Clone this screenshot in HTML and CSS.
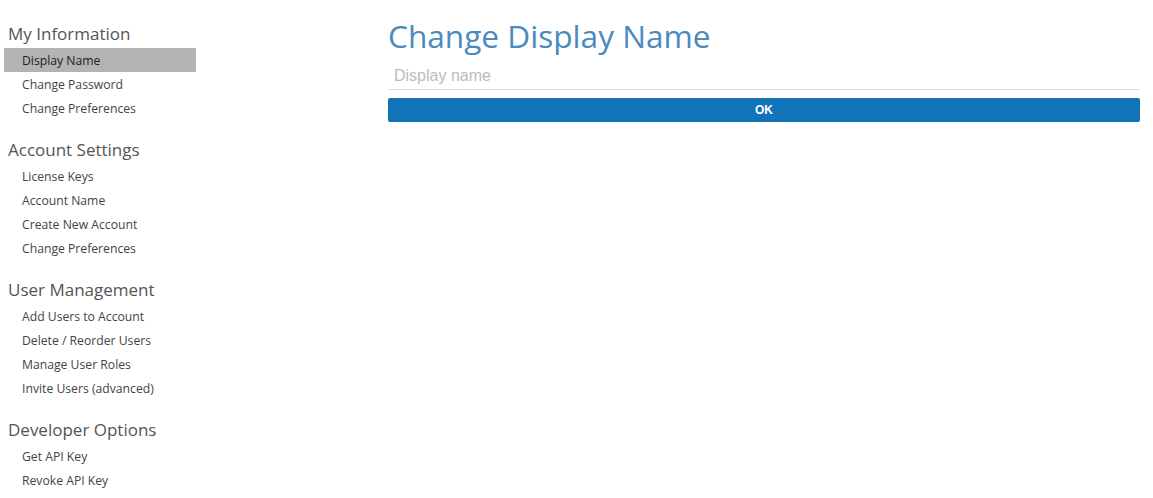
FILE: index.html
```html
<!DOCTYPE html>
<html>
<head>
<meta charset="utf-8">
<link rel="stylesheet" href="styles.css">
</head>
<body>
<div class="layout">
  <nav class="sidebar">
    <section class="group">
      <h2 class="group-title">My Information</h2>
      <a class="item active">Display Name</a>
      <a class="item">Change Password</a>
      <a class="item">Change Preferences</a>
    </section>
    <section class="group">
      <h2 class="group-title">Account Settings</h2>
      <a class="item">License Keys</a>
      <a class="item">Account Name</a>
      <a class="item">Create New Account</a>
      <a class="item">Change Preferences</a>
    </section>
    <section class="group">
      <h2 class="group-title">User Management</h2>
      <a class="item">Add Users to Account</a>
      <a class="item">Delete / Reorder Users</a>
      <a class="item">Manage User Roles</a>
      <a class="item">Invite Users (advanced)</a>
    </section>
    <section class="group">
      <h2 class="group-title">Developer Options</h2>
      <a class="item">Get API Key</a>
      <a class="item">Revoke API Key</a>
    </section>
  </nav>
  <main class="content">
    <h1 class="title">Change Display Name</h1>
    <input class="field" type="text" placeholder="Display name">
    <button class="ok">OK</button>
  </main>
</div>
</body>
</html>
```
FILE: styles.css
```css
* { box-sizing: border-box; }
html, body { margin: 0; padding: 0; background: #fff; }
body { font-family: "Open Sans", "Noto Sans", sans-serif; }
.layout {
  display: flex;
  padding: 20px 13px 0 4px;
}
.sidebar {
  width: 192px;
  flex: none;
}
.group { margin-bottom: 16px; }
.group-title {
  margin: 0;
  padding-left: 4px;
  font-size: 17px;
  font-weight: 400;
  line-height: 28px;
  color: #555;
}
.item {
  display: block;
  padding-left: 18px;
  padding-top: 1px;
  font-size: 12.2px;
  line-height: 24px;
  height: 24px;
  color: #444;
}
.item.active { background: #b3b3b3; color: #1e1e1e; }
.content {
  flex: 1;
  margin-left: 192px;
  display: flex;
  flex-direction: column;
}
.title {
  margin: -2px 0 0;
  font-size: 31.6px;
  font-weight: 400;
  line-height: 36px;
  color: #4a8bbf;
}
.field {
  margin-top: 8px;
  height: 28px;
  border: none;
  border-bottom: 1px solid #ddd;
  padding: 0 6px;
  font-family: "Liberation Sans", Arial, sans-serif;
  font-size: 16px;
  color: #333;
  outline: none;
}
.field::placeholder { color: #bbb; }
.ok {
  margin-top: 8px;
  height: 24px;
  border: none;
  border-radius: 2px;
  background: #1173b8;
  color: #fff;
  font-family: "Liberation Sans", Arial, sans-serif;
  font-weight: 700;
  font-size: 12px;
  padding: 0;
}
```
